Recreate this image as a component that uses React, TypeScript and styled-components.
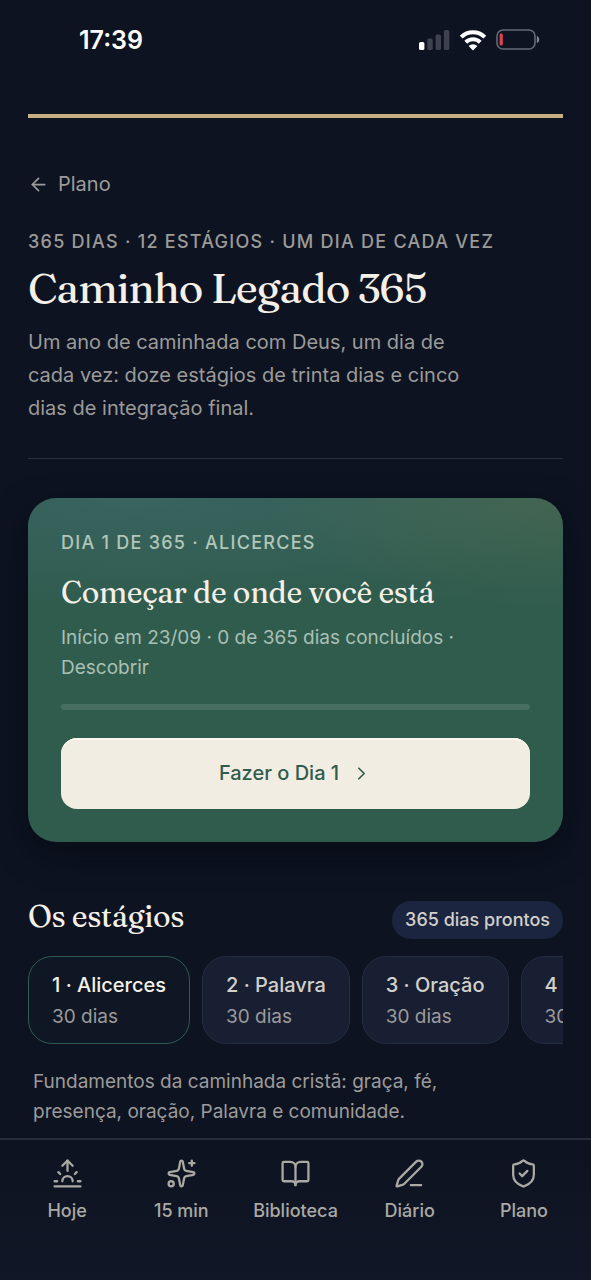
import React from "react";
import styled, { createGlobalStyle } from "styled-components";
import {
  ArrowLeft,
  BookOpen,
  ChevronRight,
  PenLine,
  ShieldCheck,
  Sparkles,
  Sunrise,
} from "lucide-react";

const sans = `Inter, "Liberation Sans", sans-serif`;
const serif = `Fraunces, "Liberation Serif", serif`;

const GlobalStyle = createGlobalStyle`
  * { box-sizing: border-box; }
  body {
    margin: 0;
    background: #0d1321;
    color: #f4f0e8;
    font-family: ${sans};
  }
  h1, h2, p { margin: 0; font-weight: 400; }
  h1, h2 { font-family: ${serif}; }
  button { font: inherit; cursor: pointer; }
`;

const Screen = styled.div`
  display: flex;
  flex-direction: column;
  height: 100vh;
`;

const Scroll = styled.div`
  flex: 1;
  min-height: 0;
  overflow-y: auto;
  scrollbar-width: none;
`;

const StatusBar = styled.div`
  display: flex;
  align-items: center;
  justify-content: space-between;
  height: 80px;
  padding: 0 51px 0 79px;
  color: #fff;
`;

const Clock = styled.time`
  font-size: 25px;
  line-height: 32px;
  font-weight: 600;
`;

const StatusIcons = styled.div`
  display: flex;
  align-items: center;
  gap: 9px;
`;

const Content = styled.main`
  padding: 34px 28px 12px;
`;

const GoldRule = styled.div`
  height: 4px;
  background: #c8b083;
`;

const BackLink = styled.a`
  display: inline-flex;
  align-items: center;
  gap: 9px;
  margin-top: 52px;
  color: #9c9b99;
  font-size: 20px;
  line-height: 28px;
  text-decoration: none;
`;

const Eyebrow = styled.p<{ $onCard?: boolean }>`
  color: ${(p) => (p.$onCard ? "#b2c6ba" : "#9c9b99")};
  font-size: 18px;
  line-height: 24px;
  font-weight: 500;
  letter-spacing: 0.07em;
  text-transform: uppercase;
`;

const Header = styled.header`
  margin-top: 31px;
  padding-bottom: 33px;
  border-bottom: 1px solid #292f3c;
`;

const Title = styled.h1`
  margin: 6px 0 10px;
  font-size: 42px;
  line-height: 56px;
  letter-spacing: -1px;
`;

const Lead = styled.p`
  max-width: 460px;
  color: #9c9b99;
  font-size: 20px;
  line-height: 33px;
`;

const DayCard = styled.section`
  margin-top: 39px;
  padding: 33px;
  border-radius: 28px;
  background:
    radial-gradient(ellipse 56% 32% at 100% 0%, rgba(200, 160, 90, 0.12), transparent),
    radial-gradient(ellipse 90% 32% at 20% 0%, rgba(80, 120, 140, 0.28), transparent),
    #305c4e;
  box-shadow: 0 12px 32px rgba(4, 5, 12, 0.5);
`;

const CardTitle = styled.h2`
  margin-top: 16px;
  font-size: 30px;
  line-height: 44px;
  letter-spacing: -0.01em;
`;

const CardMeta = styled.p`
  margin-top: 8px;
  color: #a9c0b5;
  font-size: 19px;
  line-height: 30px;
`;

const Progress = styled.div`
  height: 6px;
  margin: 21px 0 28px;
  border-radius: 3px;
  background: #476e61;
`;

const StartButton = styled.button`
  display: flex;
  align-items: center;
  justify-content: center;
  gap: 12px;
  width: 100%;
  height: 71px;
  border: 0;
  border-radius: 16px;
  background: #f2ede2;
  box-shadow: inset 0 2px 0 #faf7f0;
  color: #305c4e;
  font-size: 20px;
  font-weight: 500;
`;

const SectionHead = styled.div`
  display: flex;
  align-items: flex-start;
  justify-content: space-between;
  margin-top: 59px;
`;

const SectionTitle = styled.h2`
  font-size: 30px;
  line-height: 32px;
  letter-spacing: -0.01em;
`;

const Badge = styled.span`
  padding: 5px 13px;
  border-radius: 20px;
  background: #1c2540;
  color: #d2d0cb;
  font-size: 18px;
  line-height: 28px;
  font-weight: 500;
`;

const StageList = styled.div`
  display: flex;
  gap: 12px;
  margin-top: 17px;
  overflow-x: auto;
  scrollbar-width: none;
`;

const Stage = styled.button<{ $active?: boolean }>`
  display: flex;
  flex: none;
  flex-direction: column;
  padding: 12px 23px 10px;
  border: 1px solid ${(p) => (p.$active ? "#305c50" : "#272d40")};
  border-radius: 24px;
  background: ${(p) => (p.$active ? "#0f1624" : "#191f32")};
  color: ${(p) => (p.$active ? "#f4f0e8" : "#d2d0cb")};
  font-size: 20px;
  line-height: 32px;
  font-weight: 500;
  text-align: left;
`;

const StageDays = styled.span`
  color: #9c9b9b;
  font-size: 19px;
  font-weight: 400;
`;

const StageText = styled.p`
  margin-top: 23px;
  padding: 0 5px;
  max-width: 460px;
  color: #9c9b99;
  font-size: 19px;
  line-height: 30px;
`;

const TabBar = styled.nav`
  display: flex;
  height: 142px;
  padding: 18px 10px 0;
  border-top: 2px solid #272c39;
  background: linear-gradient(#0d1321, #111726);
`;

const Tab = styled.a`
  display: flex;
  flex: 1;
  flex-direction: column;
  align-items: center;
  gap: 8px;
  color: #aaa9a3;
  font-size: 18px;
  line-height: 28px;
  font-weight: 500;
  text-decoration: none;
`;

const stages = ["1 · Alicerces", "2 · Palavra", "3 · Oração", "4 · Identidade"];

const tabs = [
  { label: "Hoje", Icon: Sunrise },
  { label: "15 min", Icon: Sparkles },
  { label: "Biblioteca", Icon: BookOpen },
  { label: "Diário", Icon: PenLine },
  { label: "Plano", Icon: ShieldCheck },
];

const Signal = () => (
  <svg width="31" height="20" viewBox="0 0 31 20" aria-hidden="true">
    <rect x="0" y="12" width="5.4" height="8" rx="1.6" fill="#fff" />
    <rect x="8.3" y="8.6" width="5.4" height="11.4" rx="1.6" fill="#3e4150" />
    <rect x="16.6" y="4.6" width="5.4" height="15.4" rx="1.6" fill="#3e4150" />
    <rect x="24.9" y="0" width="5.4" height="20" rx="1.6" fill="#3e4150" />
  </svg>
);

const Wifi = () => (
  <svg width="28" height="22" viewBox="0 0 28 22" aria-hidden="true">
    <g fill="none" stroke="#fff" strokeWidth="4">
      <path d="M2.2 8.2a16.8 16.8 0 0 1 23.6 0" />
      <path d="M6.8 13.2a10.3 10.3 0 0 1 14.4 0" />
    </g>
    <path d="M9.6 17a6.4 6.4 0 0 1 8.8 0L14 21.4Z" fill="#fff" />
  </svg>
);

const Battery = () => (
  <svg width="44" height="22" viewBox="0 0 44 22" aria-hidden="true">
    <rect x="1" y="1" width="38" height="19" rx="6" fill="none" stroke="#666977" strokeWidth="1.6" />
    <path d="M40.8 7c3.2 1 3.2 6 0 7Z" fill="#858792" />
    <rect x="3.6" y="4.5" width="3.2" height="12" rx="1.4" fill="#e04350" />
  </svg>
);

export default function App() {
  return (
    <Screen>
      <GlobalStyle />
      <Scroll>
        <StatusBar>
          <Clock>17:39</Clock>
          <StatusIcons>
            <Signal />
            <Wifi />
            <Battery />
          </StatusIcons>
        </StatusBar>
        <Content>
          <GoldRule />
          <BackLink href="#plano">
            <ArrowLeft size={21} strokeWidth={2} />
            Plano
          </BackLink>
          <Header>
            <Eyebrow>365 dias · 12 estágios · um dia de cada vez</Eyebrow>
            <Title>Caminho Legado 365</Title>
            <Lead>
              Um ano de caminhada com Deus, um dia de cada vez: doze estágios de
              trinta dias e cinco dias de integração final.
            </Lead>
          </Header>
          <DayCard>
            <Eyebrow $onCard>Dia 1 de 365 · Alicerces</Eyebrow>
            <CardTitle>Começar de onde você está</CardTitle>
            <CardMeta>Início em 23/09 · 0 de 365 dias concluídos · Descobrir</CardMeta>
            <Progress role="progressbar" aria-label="Progresso" aria-valuenow={0} aria-valuemax={365} />
            <StartButton type="button">
              Fazer o Dia 1
              <ChevronRight size={21} strokeWidth={2} />
            </StartButton>
          </DayCard>
          <SectionHead>
            <SectionTitle>Os estágios</SectionTitle>
            <Badge>365 dias prontos</Badge>
          </SectionHead>
          <StageList>
            {stages.map((name, i) => (
              <Stage key={name} type="button" $active={i === 0}>
                {name}
                <StageDays>30 dias</StageDays>
              </Stage>
            ))}
          </StageList>
          <StageText>
            Fundamentos da caminhada cristã: graça, fé, presença, oração, Palavra e comunidade.
          </StageText>
        </Content>
      </Scroll>
      <TabBar>
        {tabs.map(({ label, Icon }) => (
          <Tab key={label} href={`#${label}`}>
            <Icon size={31} strokeWidth={1.75} />
            {label}
          </Tab>
        ))}
      </TabBar>
    </Screen>
  );
}
